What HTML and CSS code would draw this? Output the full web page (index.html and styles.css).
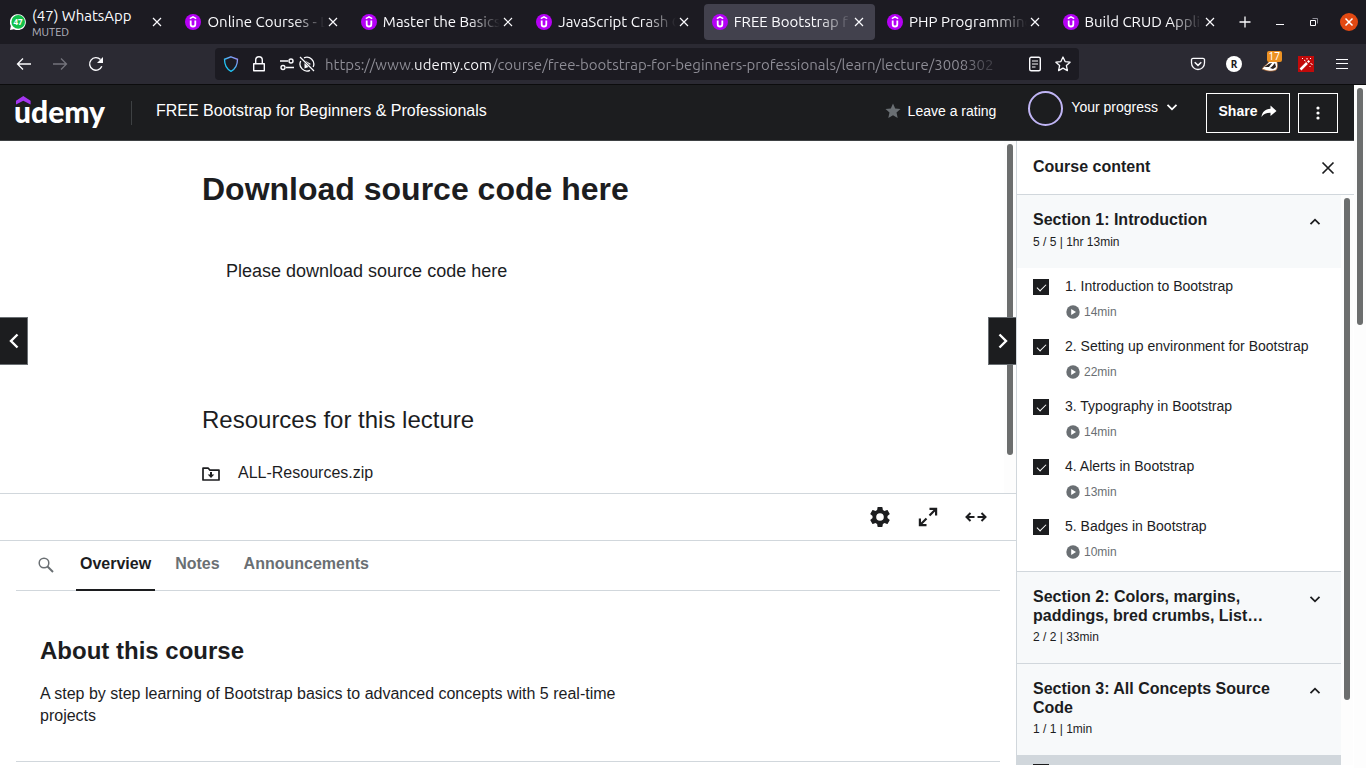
FILE: index.html
```html
<!DOCTYPE html>
<html lang="en">
<head>
<meta charset="utf-8">
<title>FREE Bootstrap for Beginners &amp; Professionals | Udemy</title>
<link rel="stylesheet" href="styles.css">
</head>
<body>
<svg class="sprite" aria-hidden="true">
  <symbol id="x" viewBox="0 0 16 16"><path d="M4 4l8 8M12 4l-8 8" fill="none" stroke="currentColor" stroke-width="1.200"/></symbol>
  <symbol id="fav" viewBox="0 0 16 16"><circle cx="8" cy="8" r="8" fill="#b500f5"/><path d="M4.800 4.600L8 2.800l3.200 1.800" fill="none" stroke="#fff" stroke-width="1.400"/><path d="M5.700 6.400v3.800a2.300 2.300 0 0 0 4.600 0V6.400" fill="none" stroke="#fff" stroke-width="1.800"/></symbol>
  <symbol id="down" viewBox="0 0 16 16"><path d="M3.500 5.800L8 10.300l4.500-4.500" fill="none" stroke="currentColor" stroke-width="1.800"/></symbol>
  <symbol id="up" viewBox="0 0 16 16"><path d="M3.500 10.200L8 5.700l4.500 4.500" fill="none" stroke="currentColor" stroke-width="1.800"/></symbol>
  <symbol id="play" viewBox="0 0 14 14"><circle cx="7" cy="7" r="6.700" fill="#6a6f73"/><path d="M5.200 4.100L10 7l-4.800 2.900z" fill="#fff"/></symbol>
</svg>

<nav class="tabstrip" aria-label="Browser tabs">
  <div class="tabs">
    <div class="tab">
      <svg class="favicon" viewBox="0 0 16 16"><path d="M0 16l.8-4A8 8 0 1 1 4 15.200z" fill="#fff"/><circle cx="8.200" cy="7.900" r="6.800" fill="#12c14b"/><text x="8.100" y="10.800" class="fav-count">47</text></svg>
      <span class="tab-text">(47) WhatsApp<small>MUTED</small></span>
      <button class="tab-close" aria-label="Close tab"><svg><use href="#x"/></svg></button>
    </div>
    <div class="tab"><svg class="favicon"><use href="#fav"/></svg><span class="tab-text fade">Online Courses - L</span><button class="tab-close" aria-label="Close tab"><svg><use href="#x"/></svg></button></div>
    <div class="tab"><svg class="favicon"><use href="#fav"/></svg><span class="tab-text fade">Master the Basics</span><button class="tab-close" aria-label="Close tab"><svg><use href="#x"/></svg></button></div>
    <div class="tab"><svg class="favicon"><use href="#fav"/></svg><span class="tab-text fade">JavaScript Crash C</span><button class="tab-close" aria-label="Close tab"><svg><use href="#x"/></svg></button></div>
    <div class="tab active"><svg class="favicon"><use href="#fav"/></svg><span class="tab-text fade">FREE Bootstrap f</span><button class="tab-close" aria-label="Close tab"><svg><use href="#x"/></svg></button></div>
    <div class="tab"><svg class="favicon"><use href="#fav"/></svg><span class="tab-text fade">PHP Programming</span><button class="tab-close" aria-label="Close tab"><svg><use href="#x"/></svg></button></div>
    <div class="tab"><svg class="favicon"><use href="#fav"/></svg><span class="tab-text fade">Build CRUD Applic</span><button class="tab-close" aria-label="Close tab"><svg><use href="#x"/></svg></button></div>
  </div>
  <div class="window-controls">
    <button aria-label="New tab"><svg viewBox="0 0 16 16"><path d="M8 2.500v11M2.500 8h11" stroke="#fbfbfe" stroke-width="1.300"/></svg></button>
    <button aria-label="Minimize"><svg viewBox="0 0 16 16"><path d="M4 10.500h8" stroke="#fbfbfe"/></svg></button>
    <button aria-label="Restore"><svg viewBox="0 0 16 16"><path d="M6.500 4.500h5v5" fill="none" stroke="#8f8e97"/><path d="M4.500 6.500h5v5h-5z" fill="none" stroke="#fbfbfe"/></svg></button>
    <button aria-label="Close window"><svg class="win-close" viewBox="0 0 18 18"><circle cx="9" cy="9" r="9" fill="#e24912"/><path d="M5.500 5.500l7 7M12.500 5.500l-7 7" stroke="#fff" stroke-width="1.500"/></svg></button>
  </div>
</nav>

<div class="toolbar">
  <div class="tool-group">
    <button aria-label="Back"><svg viewBox="0 0 16 16"><path d="M15 8H1.500M7 2.500L1.500 8 7 13.500" fill="none" stroke="#fbfbfe" stroke-width="1.300"/></svg></button>
    <button aria-label="Forward" disabled><svg viewBox="0 0 16 16"><path d="M1 8h13.500M9 2.500L14.500 8 9 13.500" fill="none" stroke="#74737c" stroke-width="1.300"/></svg></button>
    <button aria-label="Reload"><svg viewBox="0 0 16 16"><path d="M13.800 10.300A6.300 6.300 0 1 1 12.500 3.600" fill="none" stroke="#fbfbfe" stroke-width="1.400"/><path d="M15 1v6H9z" fill="#fbfbfe"/></svg></button>
  </div>
  <div class="urlbar">
    <svg class="shield" viewBox="0 0 16 16"><defs><linearGradient id="sh" x1="0" y1="1" x2="1" y2="0"><stop offset=".3" stop-color="#1fc5f5"/><stop offset="1" stop-color="#a88bf5"/></linearGradient></defs><path d="M8 .8l6.500 2.500c0 5.500-1.500 9.500-6.500 12-5-2.500-6.500-6.500-6.500-12z" fill="none" stroke="url(#sh)" stroke-width="1.300"/></svg>
    <svg viewBox="0 0 16 16"><path d="M2.700 7.700h10.600v7H2.700zM4.700 7.700V4a3.300 3.300 0 0 1 6.600 0v3.700" fill="none" stroke="#fbfbfe" stroke-width="1.400" stroke-linejoin="round"/></svg>
    <svg class="perms" viewBox="0 0 16 16"><g fill="none" stroke="#fbfbfe" stroke-width="1.400"><path d="M1 5h8M7 11.500h8"/><circle cx="12" cy="5" r="2"/><circle cx="4" cy="11.500" r="2"/></g></svg>
    <svg class="autoplay" viewBox="0 0 16 16"><path d="M5 1.800a7 7 0 0 1 9.200 9.200M11 14.300A7 7 0 0 1 1.700 5" fill="none" stroke="#fbfbfe" stroke-width="1.300"/><path d="M1 1l14 14" stroke="#fbfbfe" stroke-width="1.300"/><path d="M6 4.500L12 8l-1.300.8zM5.500 7l4 4-4 1.500z" fill="#fbfbfe"/></svg>
    <input class="url-input" type="text" aria-label="Address" value="https://www.udemy.com/course/free-bootstrap-for-beginners-professionals/learn/lecture/3008302">
    <svg viewBox="0 0 16 16"><rect x="2.700" y="1.200" width="10.600" height="13.600" rx="1.500" fill="none" stroke="#fbfbfe" stroke-width="1.400"/><path d="M5 5h6M5 8h6M5 11h3.500" stroke="#fbfbfe" stroke-width="1.200"/></svg>
    <svg class="bookmark" viewBox="0 0 16 16"><path d="M8 1l2.100 4.600 5 .6-3.700 3.400 1 5L8 12.100l-4.400 2.500 1-5L.9 6.200l5-.6z" fill="none" stroke="#fbfbfe" stroke-width="1.300" stroke-linejoin="round"/></svg>
  </div>
  <div class="tool-group">
    <button aria-label="Pocket"><svg viewBox="0 0 16 16"><path d="M1.500 3.500a1.500 1.500 0 0 1 1.500-1.200h10a1.500 1.500 0 0 1 1.500 1.200V7a6.500 6.500 0 0 1-13 0z" fill="none" stroke="#fbfbfe" stroke-width="1.300"/><path d="M4.700 6.300L8 9.400l3.300-3.100" fill="none" stroke="#fbfbfe" stroke-width="1.500"/></svg></button>
    <button aria-label="R extension"><svg viewBox="0 0 16 16"><circle cx="8" cy="8" r="8" fill="#fff"/><text x="8" y="11.500" class="ext-r">R</text></svg></button>
    <button class="badged" aria-label="Privacy Badger"><svg viewBox="0 0 16 16"><path d="M0 13c1-2 3-3 5-5 2-3 6-5 9-4 2 3 2 8 0 10-4 2-9 1-14-1z" fill="#fff" stroke="#b4672d" stroke-width=".7"/><path d="M2 11c3-1 4-4 8-4l-3 4zM8 12c2-1 3-3 5-5l1 4-3 2z" fill="#2c2320"/></svg><span class="badge">17</span></button>
    <button aria-label="Wand extension"><svg viewBox="0 0 16 16"><path d="M0 0h16v16H0z" fill="#c20a0a"/><path d="M2.500 13.500l6.500-6.500" stroke="#fff" stroke-width="2.500"/><path d="M9.800 6.200l1.500-1.500" stroke="#fff" stroke-width="2.200"/><path d="M12.500 7.500l2 1M6 4l1.500 1M9 2v1.500M13 2l-1 1M4 2.500h1M12 10v1" stroke="#fff"/></svg></button>
    <button aria-label="Menu"><svg viewBox="0 0 16 16"><path d="M2 3.500h12M2 7.500h12M2 12.500h12" stroke="#fbfbfe"/></svg></button>
  </div>
</div>

<div class="page">
  <div class="app">
    <header class="app-header">
      <a class="logo" href="#" aria-label="udemy"><svg viewBox="0 0 92 36"><path d="M0 5.800L7.300 1l7.300 4.800v3.700L7.300 5.700 0 9.500z" fill="#a435f0"/><text x="-2" y="28" class="logo-text">udemy</text></svg></a>
      <a class="course-title" href="#">FREE Bootstrap for Beginners &amp; Professionals</a>
      <button class="rating"><svg viewBox="0 0 16 16"><path d="M8 .5l2.200 4.900 5.300.6-4 3.500 1.200 5.500L8 12.300 3.300 15l1.200-5.500-4-3.500 5.300-.6z" fill="#6a6f73"/></svg>Leave a rating</button>
      <button class="progress"><span class="ring"></span><span class="progress-label">Your progress<svg><use href="#down"/></svg></span></button>
      <div class="header-buttons">
        <button class="outline share">Share<svg viewBox="0 0 16 16"><path d="M9.500 2.500L15.500 8l-6 5V9.800C5 9.800 2.500 11 .5 14c.5-5 3.500-8 9-8.300z" fill="#fff"/></svg></button>
        <button class="outline more" aria-label="More options"><svg viewBox="0 0 16 16"><g fill="#fff"><circle cx="8" cy="3" r="1.600"/><circle cx="8" cy="8" r="1.600"/><circle cx="8" cy="13" r="1.600"/></g></svg></button>
      </div>
    </header>

    <div class="columns">
      <main class="main">
        <section class="viewer">
          <div class="viewer-body">
            <article class="lecture">
              <h1>Download source code here</h1>
              <p>Please download source code here</p>
              <h2>Resources for this lecture</h2>
              <a class="resource" href="#"><svg viewBox="0 0 18 16"><path d="M1 3.200h5.300l1.700 2H17V15H1z" fill="none" stroke="#1c1d1f" stroke-width="1.700" stroke-linejoin="round"/><path d="M8 7h2v2.500h2.300L9 13 5.700 9.500H8z" fill="#1c1d1f"/></svg>ALL-Resources.zip</a>
            </article>
          </div>
          <div class="track"><span class="thumb viewer-thumb"></span></div>
          <button class="step prev" aria-label="Previous lecture"><svg viewBox="0 0 16 16"><path d="M11.500 1.500L5 8l6.500 6.500" fill="none" stroke="#fff" stroke-width="2.400"/></svg></button>
          <button class="step next" aria-label="Next lecture"><svg viewBox="0 0 16 16"><path d="M4.500 1.500L11 8l-6.500 6.500" fill="none" stroke="#fff" stroke-width="2.400"/></svg></button>
        </section>
        <div class="controls">
          <button aria-label="Settings"><svg viewBox="2 2 20 20"><path fill="#1c1d1f" d="M19.430 12.980c.04-.32.07-.64.07-.98s-.03-.66-.07-.98l2.110-1.650c.19-.15.24-.42.12-.64l-2-3.460c-.12-.22-.39-.3-.61-.22l-2.490 1c-.52-.4-1.080-.73-1.690-.98l-.38-2.650A.49.490 0 0 0 14 2h-4c-.25 0-.46.18-.49.42l-.38 2.650c-.61.25-1.170.59-1.690.98l-2.490-1c-.23-.09-.49 0-.61.22l-2 3.460c-.13.22-.07.49.12.64l2.110 1.650c-.04.32-.07.65-.07.98s.03.66.07.98l-2.110 1.650c-.19.15-.24.42-.12.64l2 3.460c.12.22.39.3.61.22l2.490-1c.52.4 1.080.73 1.690.98l.38 2.650c.03.24.24.42.49.42h4c.25 0 .46-.18.49-.42l.38-2.650c.61-.25 1.170-.59 1.690-.98l2.490 1c.23.09.49 0 .61-.22l2-3.460c.12-.22.07-.49-.12-.64zM12 15.800a3.800 3.800 0 1 1 0-7.600 3.800 3.800 0 0 1 0 7.600z"/></svg></button>
          <button aria-label="Fullscreen"><svg viewBox="0 0 20 20"><path d="M11.500 1.900h6.600v6.600M18 2l-6.500 6.500M8.500 18.100H1.900v-6.600M2 18l6.500-6.500" fill="none" stroke="#1c1d1f" stroke-width="2.200"/></svg></button>
          <button aria-label="Expanded view"><svg class="wide" viewBox="0 0 22 20"><path d="M9.500 10H1.800M5.500 6l-4 4 4 4M12.500 10h7.700M16.500 6l4 4-4 4" fill="none" stroke="#1c1d1f" stroke-width="2"/></svg></button>
        </div>
        <section class="dashboard">
          <div class="dash-tabs" role="tablist">
            <button class="search" aria-label="Search"><svg viewBox="0 0 16 16"><circle cx="6" cy="6" r="4.800" fill="none" stroke="#6a6f73" stroke-width="1.500"/><path d="M9.500 9.500l5.500 5.500" stroke="#6a6f73" stroke-width="2"/></svg></button>
            <button class="dash-tab selected" role="tab" aria-selected="true">Overview</button>
            <button class="dash-tab" role="tab">Notes</button>
            <button class="dash-tab" role="tab">Announcements</button>
          </div>
          <div class="about">
            <h2>About this course</h2>
            <p>A step by step learning of Bootstrap basics to advanced concepts with 5 real-time projects</p>
          </div>
        </section>
      </main>

      <aside class="sidebar">
        <div class="sidebar-head"><h2>Course content</h2><button aria-label="Close course content"><svg viewBox="0 0 16 16"><path d="M2.500 2.500l11 11M13.500 2.500l-11 11" stroke="#1c1d1f" stroke-width="1.700"/></svg></button></div>
        <div class="sidebar-body">
          <div class="sections">
            <section class="section">
              <button class="section-head"><span class="section-title">Section 1: Introduction</span><svg><use href="#up"/></svg><span class="section-meta">5 / 5 | 1hr 13min</span></button>
              <ul>
                <li><input type="checkbox" id="l1" checked><label for="l1">1. Introduction to Bootstrap</label><span class="time"><svg><use href="#play"/></svg>14min</span></li>
                <li><input type="checkbox" id="l2" checked><label for="l2">2. Setting up environment for Bootstrap</label><span class="time"><svg><use href="#play"/></svg>22min</span></li>
                <li><input type="checkbox" id="l3" checked><label for="l3">3. Typography in Bootstrap</label><span class="time"><svg><use href="#play"/></svg>14min</span></li>
                <li><input type="checkbox" id="l4" checked><label for="l4">4. Alerts in Bootstrap</label><span class="time"><svg><use href="#play"/></svg>13min</span></li>
                <li><input type="checkbox" id="l5" checked><label for="l5">5. Badges in Bootstrap</label><span class="time"><svg><use href="#play"/></svg>10min</span></li>
              </ul>
            </section>
            <section class="section">
              <button class="section-head"><span class="section-title">Section 2: Colors, margins, paddings, bred crumbs, List…</span><svg><use href="#down"/></svg><span class="section-meta">2 / 2 | 33min</span></button>
            </section>
            <section class="section">
              <button class="section-head"><span class="section-title">Section 3: All Concepts Source Code</span><svg><use href="#up"/></svg><span class="section-meta">1 / 1 | 1min</span></button>
              <ul class="current"><li><input type="checkbox" id="l6" aria-label="Lecture 6" checked></li></ul>
            </section>
          </div>
          <div class="track"><span class="thumb sidebar-thumb"></span></div>
        </div>
      </aside>
    </div>
  </div>
  <div class="track"><span class="thumb page-thumb"></span></div>
</div>
</body>
</html>
```

FILE: styles.css
```css
* { box-sizing: border-box; }

body {
  margin: 0;
  height: 100vh;
  display: flex;
  flex-direction: column;
  overflow: hidden;
  font-family: "Nimbus Sans", "Liberation Sans", Arial, sans-serif;
  font-size: 16px;
  color: #1c1d1f;
  background: #fff;
}

h1, h2, p, ul { margin: 0; padding: 0; }
ul { list-style: none; }
a { color: inherit; text-decoration: none; }

button {
  margin: 0;
  padding: 0;
  border: 0;
  background: none;
  font: inherit;
  color: inherit;
  text-align: left;
}

svg { display: block; flex: none; width: 16px; height: 16px; }
.sprite { position: absolute; width: 0; height: 0; }

/* Browser tabs */
.tabstrip {
  display: flex;
  height: 44px;
  flex: none;
  background: #1c1b22;
  color: #fbfbfe;
  font-family: Ubuntu, "Noto Sans", sans-serif;
  font-size: 15px;
}
.tabs { display: flex; flex: 1; min-width: 0; }
.tab {
  display: flex;
  align-items: center;
  flex: 1 1 0;
  min-width: 0;
  margin: 4px 2px;
  padding: 0 8px;
  border-radius: 4px;
}
.tab.active { background: #42414d; }
.tab-text {
  flex: 1;
  min-width: 0;
  margin-left: 6px;
  white-space: nowrap;
  line-height: 20px;
}
.fade { mask-image: linear-gradient(to left, transparent, #000 32px); }
.tab-text small { display: block; font-size: 11px; line-height: 12px; color: #b9b8c0; }
.fav-count { font: bold 8px "Noto Sans", sans-serif; fill: #fff; text-anchor: middle; }
.window-controls { display: flex; align-items: center; width: 138px; }
.window-controls button { flex: 1; display: flex; justify-content: center; }
.window-controls .win-close { width: 18px; height: 18px; }

/* Browser toolbar */
.toolbar {
  display: flex;
  align-items: center;
  height: 41px;
  flex: none;
  padding: 0 6px;
  background: #2b2a33;
  border-bottom: 1px solid #0c0c0d;
}
.tool-group { display: flex; }
.tool-group button { position: relative; display: flex; justify-content: center; width: 36px; }
.urlbar {
  display: flex;
  align-items: center;
  flex: 1;
  min-width: 0;
  height: 32px;
  margin: 0 101px;
  padding: 0 8px;
  border-radius: 4px;
  background: #1c1b22;
}
.shield { margin-right: 12px; }
.perms { margin-left: 12px; }
.autoplay { margin: 0 10px 0 4px; }
.bookmark { margin-left: 12px; }
.url-input {
  flex: 1;
  min-width: 0;
  height: 32px;
  margin-right: 8px;
  padding: 0;
  border: 0;
  outline: 0;
  font: 15px Ubuntu, "Noto Sans", sans-serif;
  color: transparent;
  background: linear-gradient(to right, #8f8e97 89px, #fbfbfe 89px, #fbfbfe 167px, #8f8e97 167px, #8f8e97 calc(100% - 56px), #45444c calc(100% - 32px)) text;
}
.ext-r { font: bold 10px "Noto Sans", sans-serif; fill: #1c1b22; text-anchor: middle; }
.badge {
  position: absolute;
  top: -5px;
  right: 6px;
  padding: 0 2px;
  border-radius: 2px;
  background: #ed9223;
  color: #fff;
  font: 10px/11px "Noto Sans", sans-serif;
}

/* Page frame */
.page { display: flex; flex: 1; min-height: 0; }
.app { display: flex; flex-direction: column; flex: 1; min-width: 0; padding-bottom: 3px; }
.track { flex: none; width: 12px; padding: 3px; background: #fdfdfd; }
.thumb { display: block; border-radius: 3px; background: #6c6e6e; }
.page-thumb { height: 35%; }
.viewer-thumb { height: 90%; }
.sidebar-thumb { height: 89%; }

.app-header {
  display: flex;
  align-items: center;
  height: 56px;
  flex: none;
  padding: 0 16px;
  background: #1c1d1f;
  border-bottom: 1px solid #3e4143;
  color: #fff;
}
.logo svg { width: 92px; height: 36px; overflow: visible; }
.logo-text { font: 900 30px Lato, sans-serif; fill: #fff; }
.course-title {
  flex: 1;
  margin-left: 23px;
  padding: 0 0 4px 24px;
  border-left: 1px solid #3e4143;
  line-height: 20px;
}
.rating { display: flex; align-items: center; gap: 7px; font-size: 14px; line-height: 20px; padding-bottom: 4px; }
.progress { display: flex; align-items: center; gap: 8px; margin-left: 32px; font-size: 14px; padding-bottom: 8px; }
.ring { width: 35px; height: 35px; border: 2px solid #c0b5f5; border-radius: 50%; }
.progress-label { display: flex; align-items: center; gap: 6px; padding-bottom: 4px; }
.header-buttons { display: flex; gap: 8px; margin-left: 26px; }
.outline {
  display: flex;
  align-items: center;
  justify-content: center;
  height: 40px;
  border: 1px solid #fff;
  font-size: 14px;
  font-weight: bold;
}
.share { width: 84px; gap: 4px; padding-bottom: 3px; }
.more { width: 40px; }

.columns { display: flex; flex: 1; min-height: 0; }
.main { flex: 1; min-width: 0; overflow: hidden; }

/* Lecture viewer */
.viewer { position: relative; display: flex; border-bottom: 1px solid #d1d7dc; }
.viewer-body { flex: 1; min-width: 0; padding: 28px 0 9px; }
.lecture { max-width: 600px; margin: 0 auto; }
.lecture h1 { font-size: 32px; line-height: 40px; }
.lecture p { padding: 48px 24px 0; font-size: 18px; line-height: 28px; }
.lecture h2 { padding-top: 120px; font-size: 24px; font-weight: normal; line-height: 30px; }
.resource { display: flex; align-items: center; gap: 18px; margin-top: 27px; line-height: 22px; }
.resource svg { width: 18px; }
.step {
  position: absolute;
  top: 50%;
  width: 28px;
  height: 48px;
  border: 1px solid #6a6f73;
  background: #1c1d1f;
  display: flex;
  align-items: center;
  justify-content: center;
}
.prev { left: 0; border-left: 0; }
.next { right: 0; border-right: 0; }

.controls {
  display: flex;
  justify-content: flex-end;
  height: 47px;
  padding: 0 16px;
  border-bottom: 1px solid #d1d7dc;
}
.controls button { display: flex; align-items: center; justify-content: center; width: 48px; }
.controls svg { width: 20px; height: 20px; }
.controls .wide { width: 22px; }

/* Dashboard */
.dashboard { padding: 0 16px; }
.dash-tabs { display: flex; gap: 16px; border-bottom: 1px solid #d1d7dc; }
.search { width: 44px; padding: 0 0 2px 22px; }
.dash-tab {
  padding: 11px 4px 14px;
  margin-bottom: -1px;
  border-bottom: 2px solid transparent;
  font-weight: bold;
  line-height: 23px;
  color: #6a6f73;
}
.selected { color: #1c1d1f; border-color: #1c1d1f; }
.about { padding: 44px 24px 34px; border-bottom: 1px solid #d1d7dc; }
.about h2 { font-size: 24px; line-height: 32px; }
.about p { max-width: 600px; padding-top: 16px; line-height: 22px; }

/* Course content */
.sidebar {
  display: flex;
  flex-direction: column;
  flex: none;
  width: 338px;
  border-left: 1px solid #d1d7dc;
}
.sidebar-head {
  display: flex;
  align-items: center;
  justify-content: space-between;
  flex: none;
  height: 54px;
  padding: 0 18px 0 16px;
  border-bottom: 1px solid #d1d7dc;
}
.sidebar-head h2 { font-size: 16px; line-height: 20px; padding-bottom: 2px; }
.sidebar-body { display: flex; flex: 1; min-height: 0; padding-right: 1px; }
.sections { flex: 1; min-width: 0; overflow: hidden; }
.section { border-bottom: 1px solid #d1d7dc; }
.section-head {
  display: grid;
  grid-template-columns: 1fr 16px;
  align-items: start;
  column-gap: 34px;
  row-gap: 4px;
  width: 100%;
  padding: 15px 18px 17px 16px;
  background: #f7f9fa;
}
.section-title { font-weight: bold; line-height: 19px; }
.section-head svg { margin-top: 4px; }
.section-meta { font-size: 12px; line-height: 17px; }
.section ul { padding: 0 0 3px; }
.section li {
  display: grid;
  grid-template-columns: 16px 1fr;
  column-gap: 16px;
  row-gap: 8px;
  padding: 8px 16px;
}
.section li input {
  appearance: none;
  display: flex;
  justify-content: center;
  width: 16px;
  height: 16px;
  margin: 3px 0 0;
  background: #1c1d1f;
}
.section li input::before {
  content: "";
  width: 4px;
  height: 8px;
  margin-top: 3px;
  border: solid #fff;
  border-width: 0 1px 1px 0;
  transform: rotate(45deg);
}
.section label { font-size: 14px; line-height: 20px; }
.time {
  grid-column: 2;
  display: flex;
  align-items: center;
  gap: 4px;
  padding-left: 1px;
  font-size: 12px;
  line-height: 16px;
  color: #6a6f73;
}
.time svg { width: 14px; height: 14px; }
.section .current { background: #d1d7dc; }
.section .current li { padding-top: 6px; }
```
